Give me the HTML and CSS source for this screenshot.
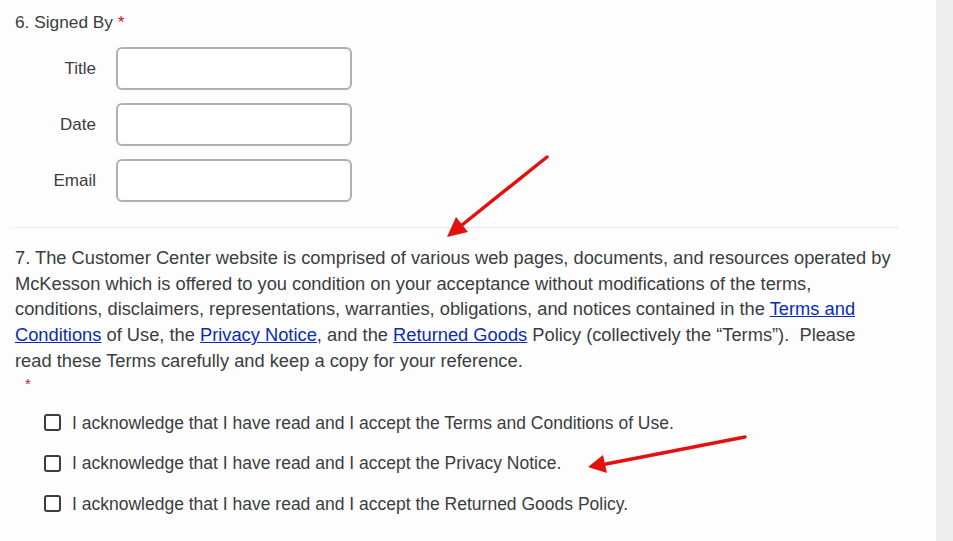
FILE: index.html
```html
<!DOCTYPE html>
<html>
<head>
<meta charset="utf-8">
<link rel="stylesheet" href="styles.css">
</head>
<body>
<div class="page">
  <main class="content">
    <section class="q6">
      <div class="qtitle">6. Signed By <span class="req">*</span></div>
      <div class="fields">
        <div class="row"><label class="lbl">Title</label><input class="inp" type="text"></div>
        <div class="row"><label class="lbl">Date</label><input class="inp" type="text"></div>
        <div class="row"><label class="lbl">Email</label><input class="inp" type="text"></div>
      </div>
    </section>
    <hr class="divider">
    <section class="q7">
      <p class="terms">7. The Customer Center website is comprised of various web pages, documents, and resources operated by McKesson which is offered to you condition on your acceptance without modifications of the terms, conditions, disclaimers, representations, warranties, obligations, and notices contained in the <a href="#">Terms and Conditions</a> of Use, the <a href="#">Privacy Notice</a>, and the <a href="#">Returned Goods</a> Policy (collectively the “Terms”).&nbsp; Please read these Terms carefully and keep a copy for your reference.</p>
      <div class="req req2">*</div>
      <div class="checks">
        <label class="chk"><span class="box"></span>I acknowledge that I have read and I accept the Terms and Conditions of Use.</label>
        <label class="chk"><span class="box"></span>I acknowledge that I have read and I accept the Privacy Notice.</label>
        <label class="chk"><span class="box"></span>I acknowledge that I have read and I accept the Returned Goods Policy.</label>
      </div>
    </section>
    <svg class="arrows" width="936" height="541" viewBox="0 0 936 541">
      <line x1="547" y1="157" x2="462" y2="225" stroke="#e31010" stroke-width="3.5" stroke-linecap="round"/>
      <polygon points="447,237 456,217 468,232" fill="#e31010"/>
      <line x1="745" y1="437" x2="606" y2="464" stroke="#e31010" stroke-width="3.5" stroke-linecap="round"/>
      <polygon points="588,467 603,455 607,473" fill="#e31010"/>
    </svg>
  </main>
  <aside class="sidebar"></aside>
</div>
</body>
</html>
```
FILE: styles.css
```css
* { box-sizing: border-box; }
html, body { margin: 0; padding: 0; }
body {
  font-family: "Liberation Sans", Arial, sans-serif;
  color: #3a3d40;
  background: #fdfdfd;
}
.page {
  display: flex;
  width: 953px;
  height: 541px;
  overflow: hidden;
}
.content {
  position: relative;
  width: 936px;
  padding: 11px 37px 0 15px;
}
.sidebar {
  width: 17px;
  background: #eeeeee;
}
.qtitle {
  font-size: 17.3px;
  line-height: 22px;
}
.req { color: #b5232e; }
.fields {
  display: flex;
  flex-direction: column;
  gap: 13px;
  margin-top: 14px;
}
.row {
  display: flex;
  align-items: center;
}
.lbl {
  width: 81px;
  text-align: right;
  font-size: 17px;
  margin-right: 20px;
}
.inp {
  width: 236px;
  height: 43px;
  border: 2px solid #b0b0b2;
  border-radius: 6px;
  background: #fff;
  outline: none;
}
.divider {
  margin: 25px 0 0 0;
  width: 884px;
  border: 0;
  border-top: 1px solid #e6e6e6;
}
.terms {
  margin: 17px 0 0 0;
  width: 878px;
  font-size: 18.3px;
  line-height: 25.7px;
}
.terms a { color: #0b2bb5; text-decoration: underline; }
.req2 {
  font-size: 15px;
  margin: 3px 0 0 10px;
  line-height: 14px;
}
.checks {
  display: flex;
  flex-direction: column;
  gap: 18px;
  margin: 21px 0 0 29px;
}
.chk {
  display: flex;
  align-items: center;
  font-size: 17.5px;
  line-height: 22.5px;
}
.box {
  width: 17px;
  height: 17px;
  border: 2px solid #3a3d40;
  border-radius: 3px;
  margin-right: 11px;
  background: #fff;
}
.arrows {
  position: absolute;
  left: 0;
  top: 0;
  pointer-events: none;
}
```
